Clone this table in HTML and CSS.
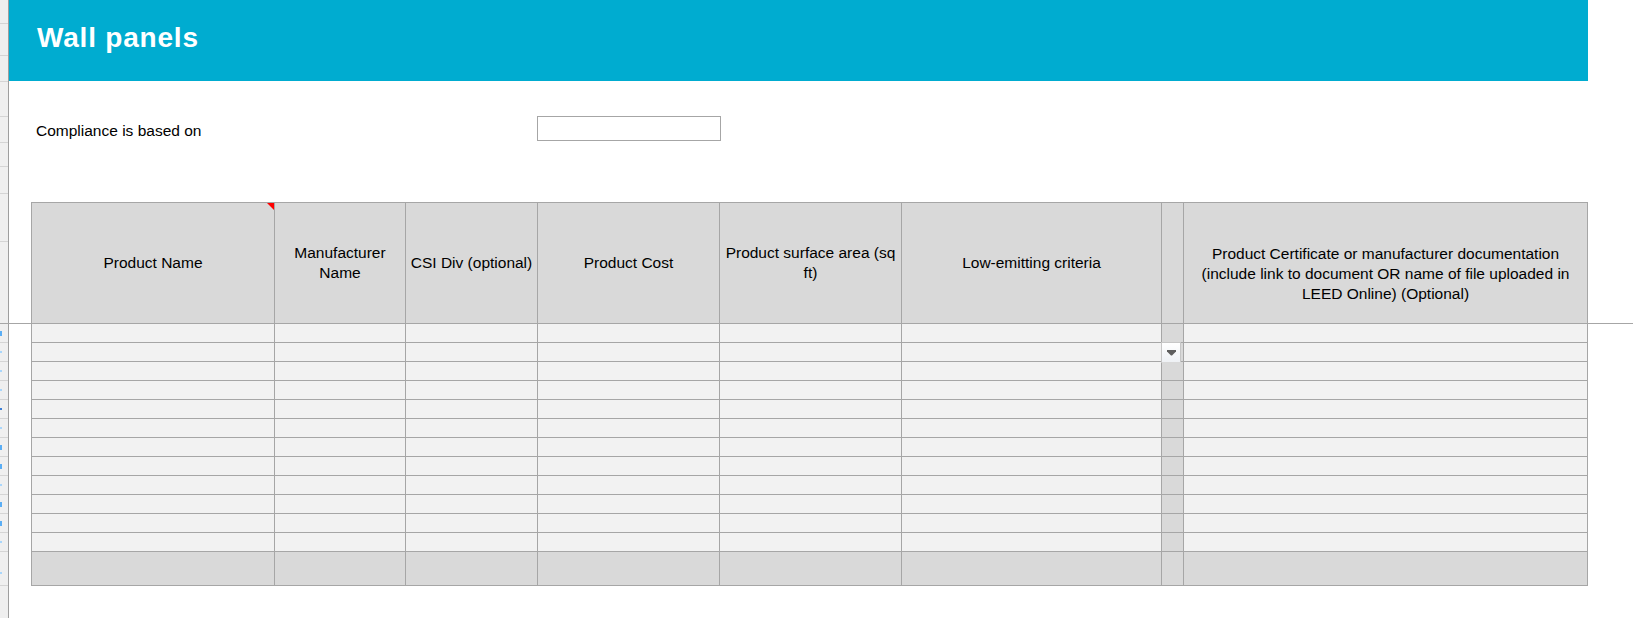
FILE: index.html
```html
<!DOCTYPE html>
<html lang="en">
<head>
<meta charset="utf-8">
<title>Wall panels</title>
<link rel="stylesheet" href="styles.css">
</head>
<body>
<div class="strip">
  <div class="seg"></div><div class="seg"></div><div class="seg"></div><div class="seg"></div>
  <div class="seg"></div><div class="seg"></div><div class="seg"></div><div class="seg"></div>
  <div class="seg"></div>
  <div class="seg"><span class="mark"></span></div>
  <div class="seg"><span class="mark dim"></span></div>
  <div class="seg"><span class="mark dim"></span></div>
  <div class="seg"><span class="mark dim"></span></div>
  <div class="seg"><span class="mark dark"></span></div>
  <div class="seg"><span class="mark dim"></span></div>
  <div class="seg"><span class="mark"></span></div>
  <div class="seg"><span class="mark"></span></div>
  <div class="seg"><span class="mark dim"></span></div>
  <div class="seg"><span class="mark"></span></div>
  <div class="seg"><span class="mark"></span></div>
  <div class="seg"><span class="mark dim"></span></div>
  <div class="seg"><span class="mark dim low"></span></div>
  <div class="seg"></div>
</div>
<div class="freeze-line"></div>
<main class="main">
  <header class="banner"><h1 class="title">Wall panels</h1></header>
  <section class="content">
    <div class="compliance">
      <span class="label">Compliance is based on</span>
      <div class="field"></div>
    </div>
    <div class="sheet">
      <div class="hd first">Product Name<span class="note"></span></div>
      <div class="hd">Manufacturer<br>Name</div>
      <div class="hd nowrap">CSI Div (optional)</div>
      <div class="hd">Product Cost</div>
      <div class="hd">Product surface area (sq<br>ft)</div>
      <div class="hd">Low-emitting criteria</div>
      <div class="hd"></div>
      <div class="hd three">Product Certificate or manufacturer documentation<br>(include link to document OR name of file uploaded in<br>LEED Online) (Optional)</div>

      <div class="c"></div><div class="c"></div><div class="c"></div><div class="c"></div><div class="c"></div><div class="c"></div><div class="c n"></div><div class="c"></div>
      <div class="c"></div><div class="c"></div><div class="c"></div><div class="c"></div><div class="c"></div><div class="c"></div><div class="c n"><span class="dropdown"><svg width="9" height="6" viewBox="0 0 9 6"><path d="M0 0H9V1.5L5 5.5H4L0 1.5Z" fill="#5e5e5e"/></svg></span></div><div class="c"></div>
      <div class="c"></div><div class="c"></div><div class="c"></div><div class="c"></div><div class="c"></div><div class="c"></div><div class="c n"></div><div class="c"></div>
      <div class="c"></div><div class="c"></div><div class="c"></div><div class="c"></div><div class="c"></div><div class="c"></div><div class="c n"></div><div class="c"></div>
      <div class="c"></div><div class="c"></div><div class="c"></div><div class="c"></div><div class="c"></div><div class="c"></div><div class="c n"></div><div class="c"></div>
      <div class="c"></div><div class="c"></div><div class="c"></div><div class="c"></div><div class="c"></div><div class="c"></div><div class="c n"></div><div class="c"></div>
      <div class="c"></div><div class="c"></div><div class="c"></div><div class="c"></div><div class="c"></div><div class="c"></div><div class="c n"></div><div class="c"></div>
      <div class="c"></div><div class="c"></div><div class="c"></div><div class="c"></div><div class="c"></div><div class="c"></div><div class="c n"></div><div class="c"></div>
      <div class="c"></div><div class="c"></div><div class="c"></div><div class="c"></div><div class="c"></div><div class="c"></div><div class="c n"></div><div class="c"></div>
      <div class="c"></div><div class="c"></div><div class="c"></div><div class="c"></div><div class="c"></div><div class="c"></div><div class="c n"></div><div class="c"></div>
      <div class="c"></div><div class="c"></div><div class="c"></div><div class="c"></div><div class="c"></div><div class="c"></div><div class="c n"></div><div class="c"></div>
      <div class="c"></div><div class="c"></div><div class="c"></div><div class="c"></div><div class="c"></div><div class="c"></div><div class="c n"></div><div class="c"></div>

      <div class="t"></div><div class="t"></div><div class="t"></div><div class="t"></div><div class="t"></div><div class="t"></div><div class="t"></div><div class="t"></div>
    </div>
  </section>
</main>
</body>
</html>
```

FILE: styles.css
```css
* { box-sizing: border-box; }

html, body {
  margin: 0;
  padding: 0;
  height: 100%;
  background: #ffffff;
}

body {
  position: relative;
  display: flex;
  min-height: 618px;
  font-family: "Liberation Sans", Arial, sans-serif;
  font-size: 15.5px;
  color: #000;
  overflow: hidden;
}

/* left row-header remnant */
.strip {
  flex: 0 0 9px;
  width: 9px;
  background: #efefef;
  border-right: 1px solid #9e9e9e;
  display: grid;
  grid-template-rows: 24px 32px 26px 35px 26px 24px 27px 48px 82px repeat(12, 19px) 34px 1fr;
}

.seg {
  border-bottom: 1px solid #d4d4d4;
  display: flex;
  align-items: center;
}

.seg:last-child { border-bottom: none; }

.mark {
  display: block;
  width: 2px;
  height: 5px;
  background: #5aaef5;
}

.mark.dim { height: 2px; background: #a9d6fb; }
.mark.dark { height: 2px; background: #3d7fd6; }
.mark.low { margin-top: 8px; }

.freeze-line {
  position: absolute;
  top: 323px;
  left: 0;
  right: 0;
  height: 1px;
  background: #a6a6a6;
}

.main {
  flex: 1;
  display: flex;
  flex-direction: column;
}

.banner {
  width: 1579px;
  height: 81px;
  background: #00acd0;
  padding: 22px 0 0 28px;
}

.title {
  margin: 0;
  font-size: 28px;
  line-height: 32px;
  letter-spacing: 0.8px;
  font-weight: 700;
  color: #ffffff;
}

.content {
  padding-left: 22px;
}

.compliance {
  display: flex;
  margin-top: 35px;
  height: 25px;
}

.label {
  width: 506px;
  padding-left: 5px;
  line-height: 20px;
  align-self: flex-end;
}

.field {
  width: 184px;
  height: 25px;
  border: 1px solid #a6a6a6;
  background: #ffffff;
}

.sheet {
  margin-top: 61px;
  display: grid;
  width: max-content;
  grid-template-columns: 242px 130px 131px 181px 181px 259px 21px 403px;
  grid-template-rows: 120px repeat(12, 18px) 33px;
  gap: 1px;
  background: #a6a6a6;
  border: 1px solid #a6a6a6;
}

.hd {
  position: relative;
  background: #d9d9d9;
  display: flex;
  align-items: center;
  justify-content: center;
  text-align: center;
  line-height: 20px;
  padding: 0 2px;
}

.hd.nowrap { white-space: nowrap; padding: 0; }

.hd.three { padding-top: 21px; }

.note {
  position: absolute;
  top: 0;
  right: 0;
  width: 0;
  height: 0;
  border-top: 7px solid #ff0000;
  border-left: 7px solid transparent;
}

.c {
  position: relative;
  background: #f2f2f2;
}

.c.n { background: #d9d9d9; }

.t { background: #d9d9d9; }

.dropdown {
  position: absolute;
  left: -1px;
  top: -1px;
  width: 20px;
  height: 21px;
  border: 1px solid #c6c6c6;
  background: linear-gradient(#ffffff, #eef1f5);
  display: flex;
  align-items: center;
  justify-content: center;
}

.dropdown svg { display: block; }
```
